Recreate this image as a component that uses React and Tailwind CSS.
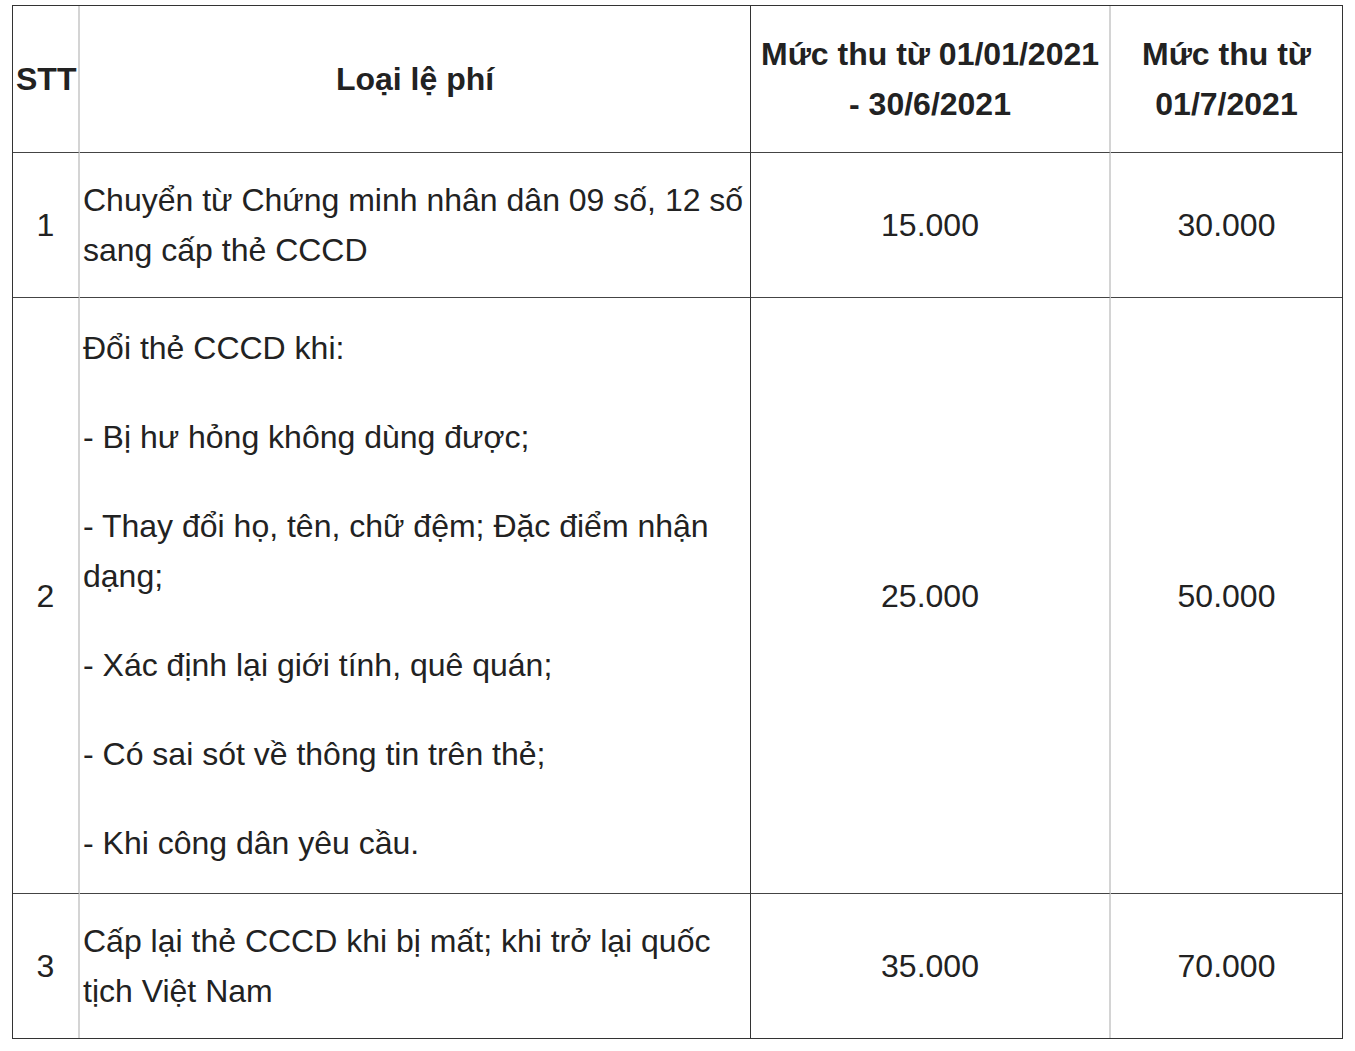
const rows = [
  {
    stt: "1",
    lines: [["Chuyển từ Chứng minh nhân dân 09 số, 12 số", "sang cấp thẻ CCCD"]],
    a: "15.000",
    b: "30.000",
  },
  {
    stt: "2",
    lines: [
      ["Đổi thẻ CCCD khi:"],
      ["- Bị hư hỏng không dùng được;"],
      ["- Thay đổi họ, tên, chữ đệm; Đặc điểm nhận", "dạng;"],
      ["- Xác định lại giới tính, quê quán;"],
      ["- Có sai sót về thông tin trên thẻ;"],
      ["- Khi công dân yêu cầu."],
    ],
    a: "25.000",
    b: "50.000",
  },
  {
    stt: "3",
    lines: [["Cấp lại thẻ CCCD khi bị mất; khi trở lại quốc", "tịch Việt Nam"]],
    a: "35.000",
    b: "70.000",
  },
];

function Lines({ parts }) {
  return parts.map((p, i) => (
    <span key={i}>
      {i > 0 && <br />}
      {p}
    </span>
  ));
}

export default function App() {
  const c1 = "border-r-2 border-r-[#d4d4d4]";
  const c2 = "border-r border-r-[#333]";
  const c3 = "border-r-2 border-r-[#d4d4d4]";
  return (
    <div className="min-h-screen bg-white pt-[5px] pl-[12px] text-[#222] font-['Liberation_Sans',Arial,sans-serif] text-[32px] leading-[50px]">
      <table className="w-[1331px] table-fixed border-separate border-spacing-0 border border-[#333]">
        <colgroup>
          <col className="w-[67px]" />
          <col className="w-[671px]" />
          <col className="w-[360px]" />
          <col />
        </colgroup>
        <thead>
          <tr className="font-bold text-center whitespace-nowrap">
            <th className={`${c1} border-b border-b-[#444] py-[23px] px-[3px]`}>STT</th>
            <th className={`${c2} border-b border-b-[#444] py-[23px] px-[3px]`}>Loại lệ phí</th>
            <th className={`${c3} border-b border-b-[#444] py-[23px] px-[3px]`}>
              Mức thu từ 01/01/2021
              <br />- 30/6/2021
            </th>
            <th className="border-b border-b-[#444] py-[23px] px-[3px]">
              Mức thu từ
              <br />
              01/7/2021
            </th>
          </tr>
        </thead>
        <tbody>
          {rows.map((r, i) => {
            const bb = i < rows.length - 1 ? "border-b border-b-[#444]" : "";
            const pad = r.lines.length > 1 ? "py-[25px]" : "py-[22px]";
            return (
              <tr key={r.stt} className="align-middle">
                <td className={`${c1} ${bb} text-center px-[3px]`}>{r.stt}</td>
                <td className={`${c2} ${bb} ${pad} px-[3px] whitespace-nowrap`}>
                  <div className="flex flex-col gap-[39px]">
                    {r.lines.map((p, j) => (
                      <p key={j}>
                        <Lines parts={p} />
                      </p>
                    ))}
                  </div>
                </td>
                <td className={`${c3} ${bb} text-center px-[3px]`}>{r.a}</td>
                <td className={`${bb} text-center px-[3px]`}>{r.b}</td>
              </tr>
            );
          })}
        </tbody>
      </table>
    </div>
  );
}
